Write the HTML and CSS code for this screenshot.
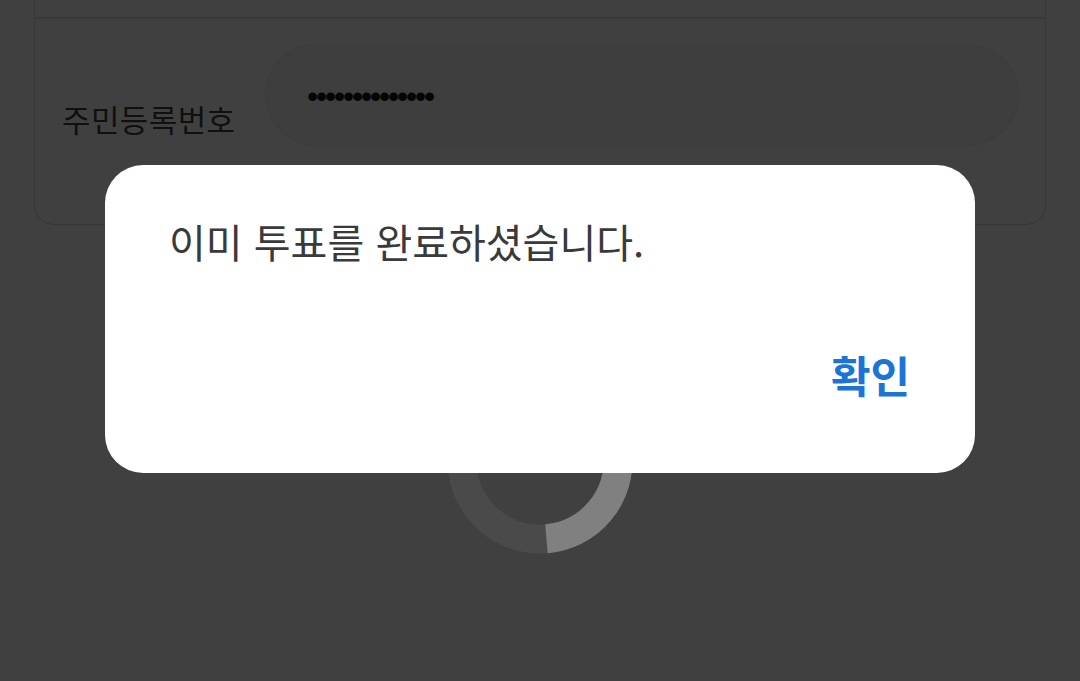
FILE: index.html
```html
<!DOCTYPE html>
<html lang="ko">
<head>
    <meta charset="UTF-8">
    <meta name="viewport" content="width=device-width, initial-scale=1.0">
    <title>투표</title>
    <link rel="stylesheet" href="styles.css">
</head>
<body>
    <div class="card">
        <div class="card-top"></div>
        <div class="field-row">
            <label class="field-label">주민등록번호</label>
            <div class="field-input"><span class="dots">••••••••••••••</span></div>
        </div>
    </div>

    <!-- loading spinner behind the alert -->
    <svg class="spinner" width="200" height="200" viewBox="0 0 200 200">
        <circle cx="100" cy="100" r="78" fill="none" stroke="#4a4a4a" stroke-width="29"/>
        <circle cx="100" cy="100" r="78" fill="none" stroke="#808080" stroke-width="29"
                stroke-dasharray="245 490" transform="rotate(-95 100 100)"/>
    </svg>

    <div class="dialog">
        <p class="dialog-msg">이미 투표를 완료하셨습니다.</p>
        <div class="dialog-actions">
            <button class="dialog-btn">확인</button>
        </div>
    </div>
</body>
</html>
```

FILE: styles.css
```css
* {
    margin: 0;
    padding: 0;
    box-sizing: border-box;
}
body {
    width: 1080px;
    height: 681px;
    overflow: hidden;
    background-color: #404040;
    font-family: "Noto Sans CJK KR", "Noto Sans", sans-serif;
}
.card {
    margin: -40px 34px 0 34px;
    height: 265px;
    border: 1px solid #373737;
    border-radius: 20px;
}
.card-top {
    height: 58px;
    border-bottom: 2px solid #393939;
}
.field-row {
    display: flex;
    padding: 26px 27px 0 27px;
}
.field-label {
    width: 204px;
    padding-top: 51px;
    font-size: 31px;
    letter-spacing: 0.4px;
    color: #101010;
}
.field-input {
    flex: 1;
    height: 100px;
    border-radius: 50px;
    background-color: #3e3e3e;
    box-shadow: 0 0 2px rgba(0, 0, 0, 0.12);
    padding: 38px 0 0 41px;
}
.dots {
    font-family: "Liberation Sans", sans-serif;
    font-size: 32px;
    letter-spacing: -2.2px;
    line-height: 26px;
    color: #050505;
}
.spinner {
    position: fixed;
    left: 440px;
    top: 361px;
}
.dialog {
    position: fixed;
    left: 105px;
    top: 165px;
    width: 870px;
    height: 308px;
    background-color: #ffffff;
    border-radius: 38px;
    padding: 47px 65px 0 64px;
    display: flex;
    flex-direction: column;
}
.dialog-msg {
    font-size: 40px;
    color: #3a3a3a;
}
.dialog-actions {
    display: flex;
    justify-content: flex-end;
    margin-top: 73px;
}
.dialog-btn {
    border: none;
    background: none;
    font-family: "Noto Sans CJK KR", sans-serif;
    font-size: 43px;
    font-weight: bold;
    color: #1b74d6;
    cursor: pointer;
}
```
